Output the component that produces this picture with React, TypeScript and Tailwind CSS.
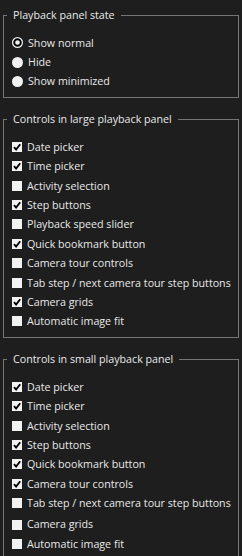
import React from 'react';

type Item = { label: string; checked: boolean; extraTop?: boolean };

const largeItems: Item[] = [
  { label: 'Date picker', checked: true },
  { label: 'Time picker', checked: true },
  { label: 'Activity selection', checked: false },
  { label: 'Step buttons', checked: true },
  { label: 'Playback speed slider', checked: false },
  { label: 'Quick bookmark button', checked: true },
  { label: 'Camera tour controls', checked: false },
  { label: 'Tab step / next camera tour step buttons', checked: false },
  { label: 'Camera grids', checked: true },
  { label: 'Automatic image fit', checked: false },
];

const smallItems: Item[] = [
  { label: 'Date picker', checked: true },
  { label: 'Time picker', checked: true },
  { label: 'Activity selection', checked: false },
  { label: 'Step buttons', checked: true },
  { label: 'Quick bookmark button', checked: true },
  { label: 'Camera tour controls', checked: true },
  { label: 'Tab step / next camera tour step buttons', checked: false },
  { label: 'Camera grids', checked: false, extraTop: true },
  { label: 'Automatic image fit', checked: false },
];

function CheckBox({ checked }: { checked: boolean }) {
  return (
    <svg width="10" height="10" viewBox="0 0 10 10" className="shrink-0">
      <rect x="0" y="0" width="10" height="10" fill="#f2f2f2" />
      {checked && (
        <path d="M2 5.2 L4.1 7.6 L8.2 2.2" fill="none" stroke="#000" strokeWidth="1.9" />
      )}
    </svg>
  );
}

function Radio({ selected }: { selected: boolean }) {
  return (
    <svg width="11" height="11" viewBox="0 0 11 11" className="shrink-0">
      <circle cx="5.5" cy="5.5" r="5.5" fill="#f2f2f2" />
      {selected && <circle cx="5.5" cy="5.5" r="3.3" fill="none" stroke="#000" strokeWidth="1.9" />}
    </svg>
  );
}

function Group({ title, children }: { title: string; children: React.ReactNode }) {
  return (
    <fieldset className="mx-[3px] border border-[#767676] pl-[3px] pr-[4px] pt-[11px] pb-[6px]">
      <legend className="px-[6px] text-[10.7px] leading-[14px] text-[#e8e8e8]">{title}</legend>
      <div className="flex flex-col pl-[5px]">{children}</div>
    </fieldset>
  );
}

function Row({ children, extraTop }: { children: React.ReactNode; extraTop?: boolean }) {
  return (
    <div className={`flex h-[19.4px] items-center gap-[5px] whitespace-nowrap text-[10.7px] text-[#e8e8e8] ${extraTop ? 'mt-[2px]' : ''}`}>
      {children}
    </div>
  );
}

export default function App() {
  return (
    <div
      className="min-h-[556px] w-[242px] overflow-hidden bg-[#1e1e1e] pt-[8px] flex flex-col gap-[14px]"
      style={{ fontFamily: '"Open Sans", "Noto Sans", sans-serif' }}
    >
      <Group title="Playback panel state">
        <Row><Radio selected /><span>Show normal</span></Row>
        <Row><Radio selected={false} /><span>Hide</span></Row>
        <Row><Radio selected={false} /><span>Show minimized</span></Row>
      </Group>
      <Group title="Controls in large playback panel">
        {largeItems.map((it) => (
          <Row key={it.label} extraTop={it.extraTop}>
            <CheckBox checked={it.checked} />
            <span>{it.label}</span>
          </Row>
        ))}
      </Group>
      <Group title="Controls in small playback panel">
        {smallItems.map((it) => (
          <Row key={it.label} extraTop={it.extraTop}>
            <CheckBox checked={it.checked} />
            <span>{it.label}</span>
          </Row>
        ))}
      </Group>
    </div>
  );
}
